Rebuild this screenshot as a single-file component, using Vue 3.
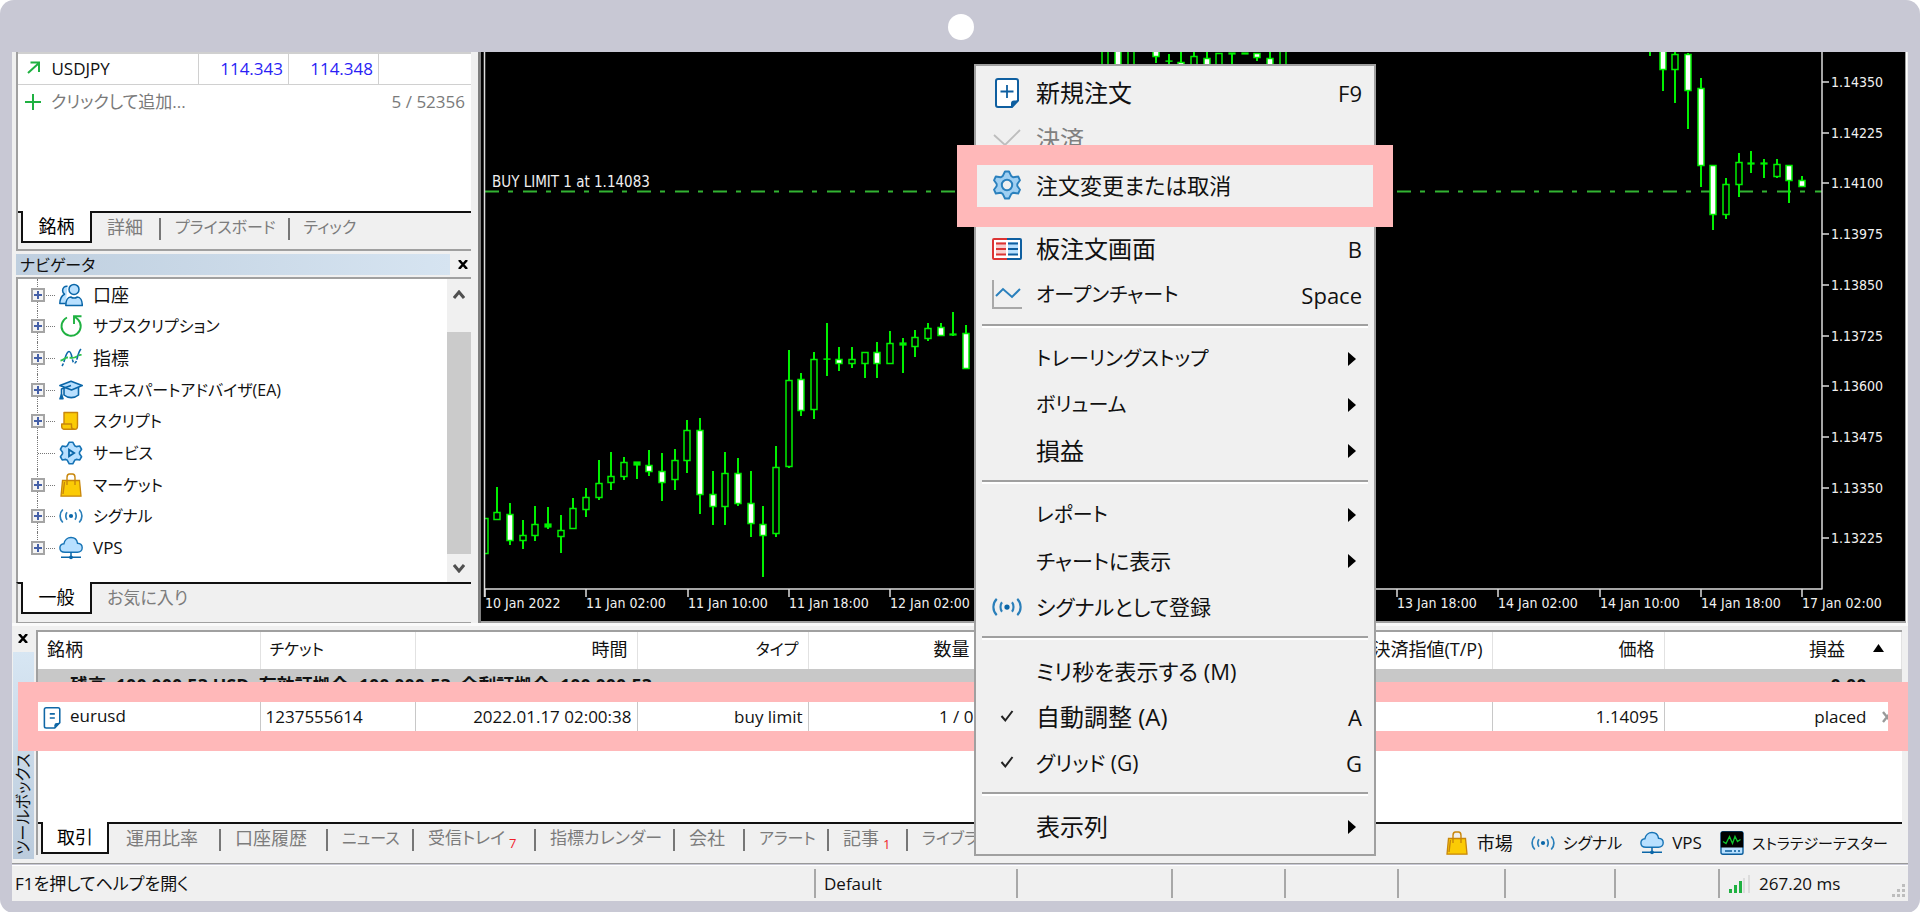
<script setup>
const tree = [
  { icon: 'users', label: '口座', size: 'kanji', open: true },
  { icon: 'refresh', label: 'サブスクリプション', size: 'kana', open: true },
  { icon: 'wave', label: '指標', size: 'kanji', open: true },
  { icon: 'hat', label: 'エキスパートアドバイザ(EA)', size: 'kana', open: true },
  { icon: 'scroll', label: 'スクリプト', size: 'kana', open: true },
  { icon: 'service', label: 'サービス', size: 'kana', open: false },
  { icon: 'bag', label: 'マーケット', size: 'kana', open: true },
  { icon: 'signal', label: 'シグナル', size: 'kana', open: true },
  { icon: 'cloud', label: 'VPS', size: 'latin', open: true }
]

const menu = [
  { icon: 'new-order', label: '新規注文', size: 'kanji', key: 'F9' },
  { icon: 'tick-thin', label: '決済', size: 'kanji', disabled: true },
  { icon: 'gear', label: '注文変更または取消', size: 'mixed' },
  { sep: true },
  { icon: 'depth', label: '板注文画面', size: 'kanji', key: 'B' },
  { icon: 'line-chart', label: 'オープンチャート', size: 'kana', key: 'Space' },
  { sep: true },
  { label: 'トレーリングストップ', size: 'kana', sub: true },
  { label: 'ボリューム', size: 'kana', sub: true },
  { label: '損益', size: 'kanji', sub: true },
  { sep: true },
  { label: 'レポート', size: 'kana', sub: true },
  { label: 'チャートに表示', size: 'soft', sub: true },
  { icon: 'signal', label: 'シグナルとして登録', size: 'soft' },
  { sep: true },
  { label: 'ミリ秒を表示する (M)', size: 'mixed' },
  { icon: 'check', label: '自動調整 (A)', size: 'kanji', key: 'A' },
  { icon: 'check', label: 'グリッド (G)', size: 'soft', key: 'G' },
  { sep: true },
  { label: '表示列', size: 'kanji', sub: true }
]

const toolTabs = [
  { label: '運用比率', size: 'kanji', w: 109 },
  { label: '口座履歴', size: 'kanji', w: 107 },
  { label: 'ニュース', size: 'kana', w: 86 },
  { label: '受信トレイ', size: 'mixed', w: 122, count: 7 },
  { label: '指標カレンダー', size: 'mixed', w: 139 },
  { label: '会社', size: 'kanji', w: 70 },
  { label: 'アラート', size: 'kana', w: 84 },
  { label: '記事', size: 'kanji', w: 79, count: 1 },
  { label: 'ライブラリ', size: 'kana', w: 110 }
]

const statusCells = [202, 155, 113, 113, 107, 110, 104]

// [index, high, body top, body bottom, low, kind]: h hollow, f filled, d flat body
const candles = [
  [0, 518, 518, 554, 554, 'h'], [1, 487, 512, 520, 520, 'h'], [2, 503, 514, 541, 545, 'f'],
  [3, 520, 535, 541, 549, 'h'], [4, 506, 524, 536, 541, 'h'], [5, 507, 524, 527, 529, 'd'],
  [6, 515, 530, 537, 553, 'h'], [7, 498, 508, 529, 529, 'h'], [8, 488, 497, 510, 517, 'h'],
  [9, 460, 483, 498, 500, 'h'], [10, 452, 476, 483, 490, 'h'], [11, 457, 462, 477, 480, 'h'],
  [12, 462, 462, 465, 479, 'd'], [13, 450, 465, 472, 476, 'f'], [14, 453, 471, 483, 501, 'f'],
  [15, 449, 460, 480, 490, 'h'], [16, 420, 430, 461, 473, 'h'], [17, 418, 430, 495, 514, 'f'],
  [18, 471, 494, 507, 525, 'f'], [19, 452, 473, 507, 525, 'h'], [20, 458, 473, 504, 506, 'f'],
  [21, 471, 503, 524, 537, 'f'], [22, 506, 524, 536, 577, 'f'], [23, 446, 467, 534, 537, 'h'],
  [24, 350, 380, 467, 468, 'h'], [25, 373, 379, 411, 416, 'f'], [26, 352, 359, 410, 419, 'h'],
  [27, 323, 359, 359, 376, 'd'], [28, 347, 359, 364, 371, 'f'], [29, 347, 359, 364, 368, 'h'],
  [30, 352, 352, 364, 378, 'h'], [31, 342, 352, 364, 378, 'f'], [32, 331, 343, 364, 364, 'h'],
  [33, 338, 343, 345, 373, 'd'], [34, 330, 337, 347, 357, 'h'], [35, 323, 328, 339, 341, 'h'],
  [36, 323, 327, 336, 336, 'f'], [37, 312, 334, 335, 336, 'd'], [38, 325, 333, 369, 369, 'f'],
  [49, 30, 30, 75, 75, 'h'], [50, 30, 30, 75, 75, 'f'], [51, 30, 30, 75, 75, 'h'],
  [53, 40, 44, 57, 63, 'f'], [54, 54, 61, 61, 66, 'd'], [55, 50, 62, 75, 75, 'f'],
  [56, 52, 56, 75, 75, 'h'], [57, 50, 58, 75, 75, 'f'], [58, 53, 53, 75, 75, 'h'],
  [59, 53, 53, 54, 75, 'd'], [60, 53, 53, 54, 54, 'd'], [61, 53, 53, 58, 61, 'f'],
  [62, 50, 58, 75, 75, 'f'], [63, 30, 30, 75, 75, 'h'],
  [92, 40, 40, 40, 56, 'h'], [93, 40, 40, 70, 91, 'f'], [94, 50, 54, 70, 103, 'h'],
  [95, 53, 54, 91, 129, 'f'], [96, 78, 88, 166, 187, 'f'], [97, 165, 165, 215, 230, 'f'],
  [98, 178, 184, 215, 219, 'h'], [99, 153, 162, 185, 197, 'h'], [100, 151, 163, 164, 173, 'd'],
  [101, 159, 163, 164, 178, 'd'], [102, 159, 164, 177, 178, 'h'], [103, 165, 165, 181, 203, 'f'],
  [104, 176, 180, 187, 187, 'f']
].map(([i, high, top, bottom, low, kind]) => ({
  x: Math.round(484.7 + i * 12.667), high, top, bottom, low, kind
}))

const prices = ['1.14350', '1.14225', '1.14100', '1.13975', '1.13850', '1.13725', '1.13600', '1.13475', '1.13350', '1.13225']
  .map((text, i) => ({ text, y: Math.round(82 + i * 50.7) }))

const dates = [
  [0, '10 Jan 2022'], [1, '11 Jan 02:00'], [2, '11 Jan 10:00'], [3, '11 Jan 18:00'], [4, '12 Jan 02:00'],
  [8, '13 Jan 10:00'], [9, '13 Jan 18:00'], [10, '14 Jan 02:00'], [11, '14 Jan 10:00'], [12, '14 Jan 18:00'], [13, '17 Jan 02:00']
].map(([i, text]) => ({ text, x: Math.round(485 + i * 101.33) }))
</script>

<template>
  <svg class="defs" aria-hidden="true">
    <symbol id="users" viewBox="0 0 24 24">
      <g fill="#b8e0ff" stroke="#0a66a8" stroke-width="1.5" stroke-linejoin="round">
        <path d="M8.5 3.2C5.5 2.8 3.6 5 3.6 7.4c0 1.7.8 3 1.9 3.8C2.600 12.600 1 15 .8 20.500h6"/>
        <circle cx="15" cy="6.400" r="5"/>
        <path d="M6.800 22.600c0-5 2-8.600 5-8.600 2 1.300 4.500 1.300 6.500 0 3 0 5 3.600 5 8.600z"/>
      </g>
    </symbol>
    <symbol id="refresh" viewBox="0 0 24 24">
      <g fill="none" stroke="#1fb141" stroke-width="1.900">
        <path d="M8 3.500A9.600 9.600 0 1 0 19 5.500L15.500 2.500"/>
        <path d="M15 10V2.200h7.500"/>
      </g>
    </symbol>
    <symbol id="wave" viewBox="0 0 24 24">
      <path d="M3 20C6 16 6.500 5.500 10 5.500S12.500 17 15.500 17 18 7 22 3" fill="none" stroke="#0a66a8" stroke-width="1.600" stroke-dasharray="3 1.500 20 1 3 1.500"/>
      <path d="M1.500 14.500c3 0 4-3 7-3s4 1 7 0 3.500-3 7-2.500" fill="none" stroke="#2fc24e" stroke-width="1.800" stroke-dasharray="8 1.500"/>
    </symbol>
    <symbol id="hat" viewBox="0 0 24 24">
      <g fill="#b8e0ff" stroke="#0a66a8" stroke-width="1.600" stroke-linejoin="round">
        <path d="M5 9v8c4 3.500 10.500 3.500 14.500 0V9"/>
        <path d="M.900 7.600L12 3.200l11.200 4.400L12.500 12z"/>
        <path d="M12 7.600L2.500 11v7" fill="none"/>
        <path d="M2.500 16.500L1 20.800h3z" fill="#0a66a8"/>
      </g>
    </symbol>
    <symbol id="scroll" viewBox="0 0 24 24">
      <g fill="#fbcb05" stroke="#c8860b" stroke-width="1.400" stroke-linejoin="round">
        <path d="M5 3.500h13.500v13.200c0 2.200-.800 3.600-2.500 3.600H5z"/>
        <path d="M2.700 15h9.800v2.600c0 1.600.800 2.700 2.500 2.700H5.500c-1.800 0-2.800-1.200-2.800-2.800z"/>
      </g>
    </symbol>
    <symbol id="service" viewBox="0 0 30 30">
      <path d="M17.200 1.500L19.600 5.900 21.600 7 26 6.300 28.200 10.300 25.600 14 25.600 16 28.200 19.700 26 23.700 21.600 23 19.600 24.100 17.200 28.500 12.800 28.500 10.400 24.100 8.400 23 4 23.700 1.800 19.700 4.400 16 4.400 14 1.800 10.300 4 6.300 8.400 7 10.400 5.900 12.800 1.500z" fill="#b8e0ff" stroke="#1673b5" stroke-width="2" stroke-linejoin="round"/>
      <path d="M12.500 10.800v8.400l6.500-4.200z" fill="none" stroke="#0a66a8" stroke-width="2.200"/>
    </symbol>
    <symbol id="bag" viewBox="0 0 24 24">
      <path d="M3.500 7.500h17L22 23.200H2z" fill="#fbcb05" stroke="#c8860b" stroke-width="1.300"/>
      <path d="M8 12V4.500C8 2.500 9 1 10.500 1h3C15 1 16 2.500 16 4.500V12M5.500 9L4 21" fill="none" stroke="#c8860b" stroke-width="1.400"/>
    </symbol>
    <symbol id="signal" viewBox="0 0 24 24">
      <circle cx="12" cy="12" r="2.100" fill="#0a66a8"/>
      <g fill="none" stroke="#2a7fba" stroke-width="1.700">
        <path d="M8 8.200c-1.600 2-1.600 5.600 0 7.600M16 8.200c1.600 2 1.600 5.600 0 7.600"/>
        <path d="M3.800 5.500c-3.600 3.600-3.600 9.400 0 13M20.200 5.500c3.600 3.600 3.600 9.400 0 13"/>
      </g>
    </symbol>
    <symbol id="cloud" viewBox="0 0 24 24">
      <path d="M6 16.300C2.700 16.300.900 14.500.900 12c0-2.300 1.700-4 4-4.200C5.500 4 8.500 1.500 12 1.500s6 2.500 6.500 5.700c2.800.100 4.700 2 4.700 4.600s-2 4.500-4.700 4.500z" fill="#b8e0ff" stroke="#1673b5" stroke-width="1.400"/>
      <path d="M12 16.300v4M2 21.300h20" stroke="#0a66a8" stroke-width="1.500"/>
      <circle cx="12" cy="21.300" r="1.900" fill="#0a66a8"/>
    </symbol>
    <symbol id="tester" viewBox="0 0 24 24">
      <rect x="1" y=".800" width="22" height="22.400" rx="1.800" fill="#b8e0ff" stroke="#0a5c9c" stroke-width="1.400"/>
      <path d="M.800 16.500V2.500Q.800.600 2.700.600h18.600q1.900 0 1.900 1.900v14z" fill="#000"/>
      <path d="M3 10.500l3 2 3.500-7 3 7 2.500-7 2.500 5 3-2" fill="none" stroke="#0fc82e" stroke-width="1.300"/>
      <path d="M5 20h7M14 20h2M18 20h2" stroke="#0a5c9c" stroke-width="1.500"/>
    </symbol>
    <symbol id="order" viewBox="0 0 24 24">
      <path d="M4.500.900h13q1.900 0 1.900 1.900V17l-5.500 6H4.500q-1.900 0-1.900-1.900V2.800Q2.600.900 4.500.900z" fill="#fff" stroke="#0f67a6" stroke-width="1.700"/>
      <path d="M13.500 23v-3q0-2.500 2.500-2.500h3.400z" fill="#0f67a6"/>
      <path d="M8.500 7.500h5.500M8.500 12H14" stroke="#0f67a6" stroke-width="1.800"/>
    </symbol>
    <symbol id="new-order" viewBox="0 0 30 30">
      <path d="M6 1h18q2 0 2 2v19.500L20 29H6q-2 0-2-2V3q0-2 2-2z" fill="#fff" stroke="#0f5fa0" stroke-width="2"/>
      <path d="M19 29.500v-4q0-3 3-3h4.500z" fill="#0f5fa0"/>
      <path d="M15 7v13M8.500 13.500h13" stroke="#0f5fa0" stroke-width="1.800"/>
    </symbol>
    <symbol id="tick-thin" viewBox="0 0 30 30">
      <path d="M2 11l11 10L28 6" fill="none" stroke="#bdbdbd" stroke-width="1.800"/>
    </symbol>
    <symbol id="gear" viewBox="0 0 30 30">
      <path d="M17 1.500L19.300 6.200 21.400 7.300 26.200 6.500 28 10.300 25.300 14 25.300 16 28 19.700 26.200 23.500 21.400 22.700 19.300 23.800 17 28.500 13 28.500 10.700 23.800 8.600 22.700 3.800 23.500 2 19.700 4.700 16 4.700 14 2 10.300 3.800 6.500 8.600 7.300 10.700 6.200 13 1.500z" fill="#9fcff2" stroke="#2a80bd" stroke-width="1.900" stroke-linejoin="round"/>
      <circle cx="15" cy="15" r="5.200" fill="#f0f0f0" stroke="#2a80bd" stroke-width="2"/>
    </symbol>
    <symbol id="depth" viewBox="0 0 30 30">
      <path d="M15 5H2q-1 0-1 1v18q0 1 1 1h13" fill="#fff" stroke="#dc3434" stroke-width="2"/>
      <path d="M15 5h13q1 0 1 1v18q0 1-1 1H15" fill="#fff" stroke="#0f5fa0" stroke-width="2"/>
      <path d="M4 8h10v13H4z" fill="#f8cfcf"/>
      <path d="M16 8h10v13H16z" fill="#b8e0ff"/>
      <path d="M4 9.500h10M4 15h10M4 20.500h10" stroke="#dc3434" stroke-width="2"/>
      <path d="M16 9.500h10M16 15h10M16 20.500h10" stroke="#0f5fa0" stroke-width="2"/>
    </symbol>
    <symbol id="line-chart" viewBox="0 0 30 30">
      <path d="M1 0v28h29" fill="none" stroke="#a8a8a8" stroke-width="2"/>
      <path d="M4 16l7-7 9 8 8-8" fill="none" stroke="#2a80bd" stroke-width="2"/>
    </symbol>
    <symbol id="check" viewBox="0 0 30 30">
      <path d="M9.500 14l3.800 4.500L20.500 9" fill="none" stroke="#222" stroke-width="2"/>
    </symbol>
  </svg>

  <div class="device">
    <span class="camera"></span>
    <div class="upper">
      <aside class="side">
        <section class="market">
          <div class="panel">
            <table class="quotes">
              <tbody>
                <tr>
                  <td class="sym">
                    <svg width="14" height="14" viewBox="0 0 14 14"><path d="M1 12L12 2M3.500 1.500H12V11" fill="none" stroke="#1fb141" stroke-width="2" /></svg>
                    USDJPY
                  </td>
                  <td class="num">114.343</td>
                  <td class="num">114.348</td>
                  <td></td>
                </tr>
              </tbody>
            </table>
            <div class="add">
              <svg width="18" height="18" viewBox="0 0 18 18"><path d="M9 1v16M1 9h16" stroke="#1fb141" stroke-width="2" /></svg>
              <button type="button" class="mixed">クリックして追加...</button>
              <span>5 / 52356</span>
            </div>
          </div>
          <nav class="tabs">
            <button type="button" class="tab on kanji">銘柄</button>
            <button type="button" class="tab kanji t1">詳細</button>
            <button type="button" class="tab kana t2">プライスボード</button>
            <button type="button" class="tab kana t3">ティック</button>
          </nav>
        </section>

        <section class="navigator">
          <header class="nav-head">
            <h2 class="kana">ナビゲータ</h2>
            <button type="button" class="close" aria-label="閉じる">
              <svg width="10" height="9" viewBox="0 0 10 9"><path d="M1 0l8 9M9 0L1 9" stroke="#000" stroke-width="2.500" /></svg>
            </button>
          </header>
          <div class="panel tree-panel">
            <ul class="tree">
              <li v-for="n in tree" :key="n.label">
                <span class="branch"><i v-if="n.open" class="plus"></i></span>
                <svg class="ico" width="24" height="24"><use :href="'#' + n.icon" /></svg>
                <span :class="n.size">{{ n.label }}</span>
              </li>
            </ul>
            <div class="scroll">
              <svg width="12" height="10" viewBox="0 0 12 10"><path d="M1 8l5-6 5 6" fill="none" stroke="#505050" stroke-width="3" /></svg>
              <i class="thumb"></i>
              <svg width="12" height="10" viewBox="0 0 12 10"><path d="M1 2l5 6 5-6" fill="none" stroke="#505050" stroke-width="3" /></svg>
            </div>
          </div>
          <nav class="tabs">
            <button type="button" class="tab on kanji">一般</button>
            <button type="button" class="tab mixed t1">お気に入り</button>
          </nav>
        </section>
      </aside>

      <main class="chart">
        <svg width="100%" height="569">
          <g transform="translate(-481 -52)">
            <path d="M485 191.500H1822" stroke="#32b432" stroke-width="2" stroke-dasharray="14 9 5 10" />
            <g stroke="#00f000">
              <g v-for="c in candles" :key="c.x">
                <path :d="`M${c.x} ${c.high}V${c.low}`" stroke-width="2" />
                <rect v-if="c.kind !== 'd'" :x="c.x - 3" :y="c.top + 0.5" width="6" :height="Math.max(c.bottom - c.top - 1, 1)" :fill="c.kind === 'f' ? '#fff' : '#000'" stroke-width="1.500" />
                <rect v-else :x="c.x - 3" :y="c.top" width="6" :height="Math.max(c.bottom - c.top, 0.2)" fill="#00f000" stroke-width="1.200" />
              </g>
            </g>
            <path d="M481 52h3v569h-3z" fill="#000" />
            <path d="M484.500 52V597M484 589H1822.500M1822 52V589" fill="none" stroke="#dcdcdc" stroke-width="1.500" />
            <g stroke="#dcdcdc" stroke-width="1.500">
              <path v-for="p in prices" :key="p.y" :d="`M1822 ${p.y}h7`" />
              <path v-for="d in dates" :key="d.x" :d="`M${d.x} 589v8`" />
            </g>
            <g class="axis-text">
              <text v-for="p in prices" :key="p.y" x="1831" :y="p.y + 5">{{ p.text }}</text>
              <text v-for="d in dates" :key="d.x" :x="d.x" y="608">{{ d.text }}</text>
              <text class="order-text" x="492" y="187">BUY LIMIT 1 at 1.14083</text>
            </g>
          </g>
        </svg>
      </main>
    </div>

    <section class="toolbox">
      <div class="strip">
        <button type="button" class="close" aria-label="閉じる">
          <svg width="10" height="9" viewBox="0 0 10 9"><path d="M1 0l8 9M9 0L1 9" stroke="#000" stroke-width="2.500" /></svg>
        </button>
        <h2 class="kana">ツールボックス</h2>
      </div>
      <div class="tool-main">
        <div class="orders-wrap">
          <table class="orders">
            <colgroup>
              <col class="c1" /><col class="c2" /><col class="c3" /><col class="c4" /><col class="c4" /><col class="c4" /><col class="c4" /><col class="c4" /><col class="c5" /><col />
            </colgroup>
            <thead>
              <tr>
                <th class="l kanji">銘柄</th>
                <th class="l kana">チケット</th>
                <th class="kanji">時間</th>
                <th class="kana">タイプ</th>
                <th class="kanji">数量</th>
                <th></th>
                <th></th>
                <th class="kanji">決済指値(T/P)</th>
                <th class="kanji">価格</th>
                <th class="kanji last">損益<svg width="11" height="8" viewBox="0 0 11 8"><path d="M5.500 0L11 8H0z" /></svg></th>
              </tr>
            </thead>
            <tbody>
              <tr class="balance">
                <td colspan="9">残高: 100 000.53 USD&nbsp; 有効証拠金: 100 000.53&nbsp; 余剰証拠金: 100 000.53</td>
                <td>0.00</td>
              </tr>
              <tr class="order">
                <td class="l first"><svg width="22" height="24"><use href="#order" /></svg>eurusd</td>
                <td class="l">1237555614</td>
                <td>2022.01.17 02:00:38</td>
                <td>buy limit</td>
                <td>1 / 0</td>
                <td></td>
                <td></td>
                <td></td>
                <td>1.14095</td>
                <td class="last">placed<svg width="10" height="12" viewBox="0 0 10 12"><path d="M1 1l8 10M9 1L1 11" stroke="#999" stroke-width="2.400" /></svg></td>
              </tr>
            </tbody>
          </table>
        </div>
        <nav class="tabs tool-tabs">
          <button type="button" class="tab on kanji">取引</button>
          <button v-for="t in toolTabs" :key="t.label" type="button" class="tab plain" :class="t.size" :style="{ width: t.w + 'px' }">
            {{ t.label }}<sub v-if="t.count">{{ t.count }}</sub>
          </button>
          <div class="links">
            <button type="button" class="kanji"><svg width="24" height="24"><use href="#bag" /></svg>市場</button>
            <button type="button" class="kana"><svg width="24" height="24"><use href="#signal" /></svg>シグナル</button>
            <button type="button" class="latin"><svg width="24" height="24"><use href="#cloud" /></svg>VPS</button>
            <button type="button" class="tight"><svg width="24" height="24"><use href="#tester" /></svg>ストラテジーテスター</button>
          </div>
        </nav>
      </div>
    </section>

    <footer class="status">
      <span class="help mixed">F1を押してヘルプを開く</span>
      <span v-for="(w, i) in statusCells" :key="i" class="cell" :style="{ width: w + 'px' }">{{ i === 0 ? 'Default' : '' }}</span>
      <span class="cell ping">
        <svg width="22" height="18" viewBox="0 0 22 18">
          <path d="M1 14h3v4H1zM6 10h3v8H6zM11 6h3v12h-3z" fill="#1fb141" />
          <path d="M15 3h2v15h-2zM20 0h2v18h-2z" fill="#dcdcdc" />
        </svg>
        267.20 ms
        <svg class="grip" width="14" height="14" viewBox="0 0 14 14"><path d="M11 1h3v3h-3zM6 6h3v3H6zM11 6h3v3h-3zM1 11h3v3H1zM6 11h3v3H6zM11 11h3v3h-3z" fill="#bdbdbd" /></svg>
      </span>
    </footer>

    <div class="mark mark-row"></div>

    <div class="menu" role="menu">
      <template v-for="(m, i) in menu" :key="i">
        <hr v-if="m.sep" />
        <button v-else type="button" role="menuitem" :disabled="m.disabled">
          <span class="m-ico"><svg v-if="m.icon" width="30" height="30"><use :href="'#' + m.icon" /></svg></span>
          <span class="m-label" :class="'m-' + m.size">{{ m.label }}</span>
          <span v-if="m.key" class="m-key">{{ m.key }}</span>
          <svg v-if="m.sub" class="m-sub" width="8" height="14" viewBox="0 0 8 14"><path d="M0 0l8 7-8 7z" /></svg>
        </button>
      </template>
    </div>

    <div class="mark mark-menu"></div>
  </div>
</template>

<style>
body {
  margin: 0;
  background: #fff;
}
</style>

<style scoped>
.defs {
  position: absolute;
  width: 0;
  height: 0;
}
.device {
  position: relative;
  box-sizing: border-box;
  padding: 52px 12px 12px;
  background: #c8c8d4;
  border-radius: 14px;
  overflow: hidden;
  font-family: "Open Sans", "Noto Sans CJK JP", sans-serif;
  font-size: 17px;
  line-height: 24px;
  font-feature-settings: "palt";
  color: #111;
}
.camera {
  position: absolute;
  top: 14px;
  left: 50%;
  width: 26px;
  height: 26px;
  margin-left: -12px;
  border-radius: 50%;
  background: #fff;
}
button {
  padding: 0;
  border: 0;
  background: none;
  color: inherit;
  font: inherit;
  font-feature-settings: inherit;
  white-space: nowrap;
}
h2 {
  margin: 0;
  font-weight: 400;
}
.kanji { font-size: 18px; }
.mixed { font-size: 17px; }
.kana { font-size: 16px; }
.latin { font-size: 17px; }
.tight { font-size: 15px; }

.upper {
  display: flex;
  height: 571px;
  background: #f0f0f0;
}
.side {
  box-sizing: border-box;
  width: 469px;
  padding: 0 7px 0 4px;
  flex: none;
  display: flex;
  flex-direction: column;
  border-right: 3px solid #808080;
}
.market {
  height: 199px;
  box-sizing: border-box;
  border-left: 2px solid #a0a0a0;
  border-bottom: 2px solid #a0a0a0;
}
.panel {
  background: #fff;
}
.market .panel {
  height: 159px;
}
.quotes {
  width: 100%;
  border-collapse: collapse;
  table-layout: fixed;
}
.quotes td {
  height: 30px;
  padding: 0 5px 0 0;
  border: 1px solid #d0d0d0;
  border-width: 2px 0 1px 1px;
}
.quotes td:first-child {
  border-left: 0;
}
.quotes .sym {
  width: 175px;
}
.sym svg {
  margin: 0 6px 0 9px;
}
.quotes .num {
  width: 84px;
  text-align: right;
  color: #2a1ef5;
}
.add {
  display: flex;
  align-items: center;
  height: 33px;
  padding: 0 6px;
  color: #7a7a7a;
}
.add button {
  margin: 0 auto 0 9px;
}
.tabs {
  display: flex;
  align-items: flex-start;
  height: 35px;
  border-top: 2px solid #111;
  background: #f0f0f0;
}
.tab {
  height: 27px;
  color: #7c7c7c;
  text-align: left;
}
.tab.on {
  box-sizing: border-box;
  width: 71px;
  height: 32px;
  margin: -2px 0 0 3px;
  border: 2px solid #111;
  border-top: 0;
  background: #fff;
  color: #000;
  text-align: center;
}
.t1 { margin-left: 15px; }
.t2,
.t3,
.tab.plain + .tab.plain {
  background: linear-gradient(#777, #777) 0 5px / 2px 22px no-repeat;
}
.t2 { margin-left: 16px; padding-left: 16px; }
.t3 { margin-left: 13px; padding-left: 15px; }

.navigator {
  flex: 1;
  display: flex;
  flex-direction: column;
  border-bottom: 1px solid #a0a0a0;
}
.nav-head {
  display: flex;
  align-items: center;
  height: 21px;
  margin: 3px 0 2px;
  background: linear-gradient(90deg, #bfcfdf, #d6e4f1) 0 0 / calc(100% - 21px) 100% no-repeat;
}
.nav-head h2 {
  flex: 1;
  padding-left: 4px;
}
.close {
  display: grid;
  place-items: center;
  width: 20px;
}
.nav-head .close {
  margin-right: -2px;
}
.tree-panel {
  flex: 1;
  display: flex;
  border-top: 2px solid #a0a0a0;
  border-left: 2px solid #a0a0a0;
}
.navigator .tabs {
  border-left: 2px solid #a0a0a0;
  height: 38px;
}
.tree {
  flex: 1;
  display: grid;
  grid-auto-rows: 1fr;
  margin: 0;
  padding: 0 0 18px;
  list-style: none;
}
.tree li {
  display: flex;
  align-items: center;
}
.branch {
  position: relative;
  align-self: stretch;
  width: 37px;
  margin-right: 4px;
}
.branch::before {
  content: "";
  position: absolute;
  left: 19px;
  top: 0;
  bottom: 0;
  border-left: 1px dotted #777;
}
.branch::after {
  content: "";
  position: absolute;
  left: 20px;
  right: 0;
  top: 50%;
  border-top: 1px dotted #777;
}
.tree li:last-child .branch::before {
  bottom: 50%;
}
.plus {
  position: absolute;
  z-index: 1;
  top: 50%;
  left: 13px;
  width: 10px;
  height: 10px;
  margin-top: -7px;
  border: 2px solid #a4a4a4;
  background:
    linear-gradient(#4560a8, #4560a8) center / 8px 2px no-repeat,
    linear-gradient(#4560a8, #4560a8) center / 2px 8px no-repeat,
    #f4f4f4;
}
.tree .ico {
  margin-right: 10px;
}
.scroll {
  display: flex;
  flex-direction: column;
  align-items: center;
  width: 24px;
  padding: 11px 0 9px;
  background: #f0f0f0;
}
.thumb {
  flex: 1;
  width: 100%;
  margin: 32px 0 9px;
  background: #cbcbcb;
}

.chart {
  flex: 1;
  min-width: 0;
  height: 569px;
  background: #000;
  border-right: 1px solid #a0a0a0;
  border-bottom: 2px solid #a0a0a0;
  box-shadow: 1px 0 #fff;
  margin-right: 2px;
}
.chart svg {
  display: block;
}
.axis-text {
  fill: #f0f0f0;
  font-family: "DejaVu Sans Condensed", "Open Sans", sans-serif;
  font-size: 14px;
}
.order-text {
  font-size: 15px;
}

.toolbox {
  display: flex;
  height: 239px;
  padding-top: 1px;
  background: linear-gradient(#fafafa, #fafafa) 0 0 / 100% 3px no-repeat, #f0f0f0;
  border-bottom: 1px solid #999;
}
.strip {
  box-sizing: border-box;
  width: 24px;
  display: flex;
  flex-direction: column;
  padding: 6px 2px 4px 1px;
}
.strip .close {
  height: 17px;
}
.strip h2 {
  flex: 1;
  margin-top: 5px;
  padding-top: 4px;
  writing-mode: vertical-rl;
  text-orientation: sideways;
  transform: rotate(180deg);
  line-height: 21px;
  background: linear-gradient(#bbcbdc, #d7e6f3);
}
.tool-main {
  flex: 1;
  min-width: 0;
  margin: 6px 6px 0 0;
  border-top: 2px solid #a0a0a0;
  border-left: 2px solid #a0a0a0;
  height: 223px;
}
.orders-wrap {
  height: 190px;
  background: #fff;
}
.orders {
  width: 100%;
  border-collapse: collapse;
  table-layout: fixed;
}
.c1 { width: 222px; }
.c2 { width: 155px; }
.c3 { width: 222px; }
.c4 { width: 171px; }
.c5 { width: 172px; }
.orders th {
  height: 34px;
  padding: 0 9px 3px;
  border-right: 1px solid #e2e2e2;
  font-weight: 400;
  text-align: right;
  white-space: nowrap;
}
.orders td {
  padding: 0 5px;
  text-align: right;
  white-space: nowrap;
}
.orders .l {
  text-align: left;
}
.orders th.last {
  padding-right: 17px;
}
.orders th.last svg {
  margin: 0 0 4px 28px;
}
.balance td {
  height: 32px;
  background: #c8c8c8;
  font-size: 18px;
  font-weight: 700;
  font-feature-settings: normal;
}
.balance td:first-child {
  padding-left: 32px;
  text-align: left;
}
.balance td:last-child {
  padding-right: 35px;
}
.order td {
  height: 30px;
  padding-top: 1px;
  border-right: 1px solid #c8c8c8;
}
.order .last {
  padding-right: 10px;
  border-right: 0;
}
.order .last svg {
  margin-left: 15px;
}
.order .first svg {
  vertical-align: middle;
  margin: 0 6px 0 -1px;
}
.tool-tabs {
  height: 31px;
}
.tool-tabs .on {
  width: 68px;
  margin-right: 1px;
}
.tab.plain {
  padding: 0 0 0 16px;
  box-sizing: border-box;
}
.tab sub {
  margin-left: 4px;
  color: #f0202a;
  font-size: 13px;
  line-height: 0;
}
.links {
  display: flex;
  gap: 18px;
  margin: 7px 14px 0 auto;
}
.links button {
  display: flex;
  align-items: center;
  gap: 8px;
}
.status {
  display: flex;
  align-items: center;
  height: 35px;
  margin-top: 1px;
  border-top: 1px solid #fff;
  background: #f0f0f0;
}
.help {
  flex: 1;
  padding-left: 3px;
}
.cell {
  box-sizing: border-box;
  height: 29px;
  padding-left: 8px;
  border-left: 2px solid #a8a8a8;
  line-height: 29px;
}
.ping {
  display: flex;
  align-items: center;
  gap: 9px;
  width: 190px;
}
.grip {
  align-self: flex-end;
  margin: 0 3px 1px auto;
}

.mark {
  position: absolute;
  box-sizing: border-box;
  border: 20px solid #ffb8b9;
  pointer-events: none;
}
.mark-row {
  left: 18px;
  right: 12px;
  top: 682px;
  height: 69px;
}
.mark-menu {
  left: 957px;
  top: 145px;
  width: 436px;
  height: 82px;
}
.menu {
  position: absolute;
  left: 974px;
  top: 64px;
  box-sizing: border-box;
  width: 402px;
  padding: 4px 6px;
  border: 2px solid #a0a0a0;
  background: #f0f0f0;
}
.menu button {
  display: flex;
  align-items: center;
  width: 100%;
  height: 46px;
  padding: 0 6px 0 10px;
}
.menu button:disabled {
  color: #808080;
}
.menu hr {
  height: 2px;
  margin: 6px 0 8px;
  border: 0;
  border-top: 2px solid #a0a0a0;
  background: #fff;
}
.m-ico {
  width: 30px;
  height: 30px;
  margin-right: 14px;
}
.m-label {
  flex: 1;
  text-align: left;
}
.m-kanji { font-size: 24px; }
.m-mixed { font-size: 22px; }
.m-soft { font-size: 21px; }
.m-kana { font-size: 20px; }
.m-key { font-size: 22px; }
.m-sub {
  margin-right: 6px;
}
</style>
